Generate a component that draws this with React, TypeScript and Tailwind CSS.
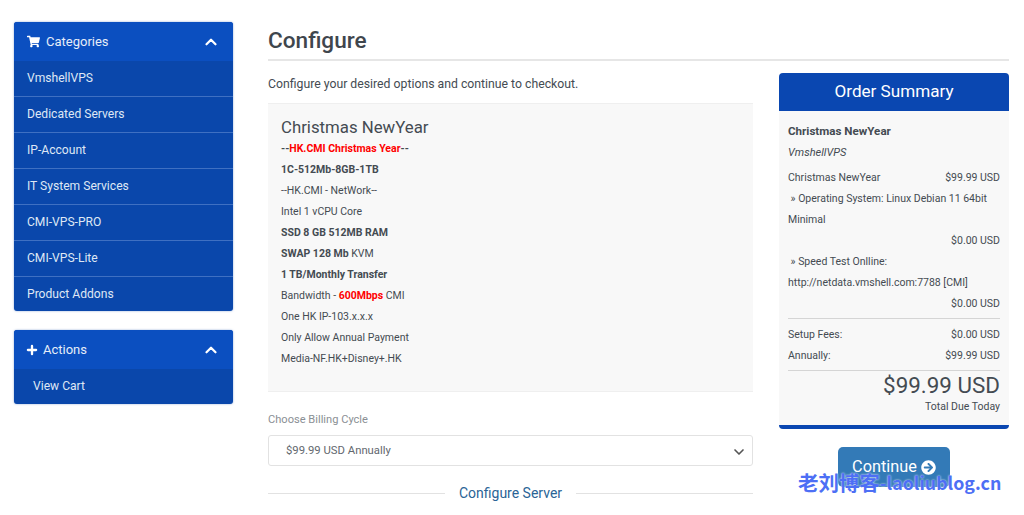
import { ChevronDown, ChevronUp, Plus } from "lucide-react";
import { FaArrowCircleRight, FaShoppingCart } from "react-icons/fa";

const CATEGORIES = [
  "VmshellVPS",
  "Dedicated Servers",
  "IP-Account",
  "IT System Services",
  "CMI-VPS-PRO",
  "CMI-VPS-Lite",
  "Product Addons",
];

function PanelHeader({ icon, title }: { icon: React.ReactNode; title: string }) {
  return (
    <div className="flex h-[39px] items-center bg-[#0b4fc0] pl-[13px] pr-[13px] text-[13px] text-[#e6edf8]">
      {icon}
      <span className="flex-1">{title}</span>
      <ChevronUp className="h-[18px] w-[18px] text-white" strokeWidth={3} />
    </div>
  );
}

function Line({ children }: { children: React.ReactNode }) {
  return <div className="h-[21px] leading-[21px]">{children}</div>;
}

function Row({ left, right }: { left: string; right: string }) {
  return (
    <div className="flex h-[21px] justify-between leading-[21px]">
      <span>{left}</span>
      <span>{right}</span>
    </div>
  );
}

export default function App() {
  return (
    <div className="relative flex h-[515px] w-[1024px] overflow-hidden bg-white font-['Roboto',sans-serif] text-[#444b52]">
      <aside className="ml-[14px] mt-[22px] flex w-[219px] flex-col gap-[19px]">
        <div className="overflow-hidden rounded-[3px] bg-[#0a47ab] shadow-[0_0_2px_rgba(10,71,171,0.5)]">
          <PanelHeader
            icon={<FaShoppingCart className="mr-[6px] h-[13px] w-[13px] text-white" />}
            title="Categories"
          />
          {CATEGORIES.map((name, i) => (
            <div
              key={name}
              className={`flex items-center pl-[13px] text-[12.1px] text-[#dfe7f5] ${
                i > 0 && i < 6 ? "h-[36px] border-t border-[#3f70c2]" : ""
              } ${i === 0 ? "h-[35px]" : ""} ${i === 6 ? "h-[35px] border-t border-[#3f70c2]" : ""}`}
            >
              {name}
            </div>
          ))}
        </div>

        <div className="overflow-hidden rounded-[3px] bg-[#0a47ab] shadow-[0_0_2px_rgba(10,71,171,0.5)]">
          <PanelHeader
            icon={<Plus className="-ml-[2px] mr-[4px] h-[14px] w-[14px] text-white" strokeWidth={4} />}
            title="Actions"
          />
          <div className="flex h-[35px] items-center pl-[19px] text-[12.1px] text-[#dfe7f5]">
            View Cart
          </div>
        </div>
      </aside>

      <main className="ml-[35px] w-[741px] pt-[25px]">
        <h1 className="h-[36px] border-b-2 border-[#e6e6e6] text-[22.6px] font-medium leading-[32px] text-[#3f464d]">
          Configure
        </h1>

        <div className="mt-[14px] flex justify-between">
          <div className="w-[485px]">
            <p className="text-[12.25px] leading-[18px]">
              Configure your desired options and continue to checkout.
            </p>

            <div className="mt-[10px] h-[289px] border-y border-[#efefef] bg-[#f8f8f8] pl-[13px] pt-[12px] text-[10.5px]">
              <div className="h-[22px] text-[16.8px] leading-[22px]">Christmas NewYear</div>
              <Line>
                <b className="font-bold">
                  --<span className="text-[#ff0000]">HK.CMI Christmas Year</span>--
                </b>
              </Line>
              <Line>
                <b className="font-bold">1C-512Mb-8GB-1TB</b>
              </Line>
              <Line>--HK.CMI - NetWork--</Line>
              <Line>Intel 1 vCPU Core</Line>
              <Line>
                <b className="font-bold">SSD 8 GB 512MB RAM</b>
              </Line>
              <Line>
                <b className="font-bold">SWAP 128 Mb</b> KVM
              </Line>
              <Line>
                <b className="font-bold">1 TB/Monthly Transfer</b>
              </Line>
              <Line>
                Bandwidth - <b className="font-bold text-[#ff0000]">600Mbps</b> CMI
              </Line>
              <Line>One HK IP-103.x.x.x</Line>
              <Line>Only Allow Annual Payment</Line>
              <Line>Media-NF.HK+Disney+.HK</Line>
            </div>

            <div className="mt-[20px] text-[11.1px] leading-[16px] text-[#8a8f94]">
              Choose Billing Cycle
            </div>
            <div className="mt-[7px] flex h-[31px] items-center justify-between rounded-[3px] border border-[#e2e2e2] pl-[17px] pr-[5px] pt-[2px] text-[11.3px] text-[#62686e]">
              <span>$99.99 USD Annually</span>
              <ChevronDown className="h-[16px] w-[16px] text-[#555]" strokeWidth={2.5} />
            </div>
            <div className="mt-[18px] flex items-center gap-[14px]">
              <div className="h-px flex-1 bg-[#e2e2e2]" />
              <span className="text-[14px] leading-[18px] text-[#2a6496]">Configure Server</span>
              <div className="h-px flex-1 bg-[#e2e2e2]" />
            </div>
          </div>

          <div className="mt-[-2px] flex w-[230px] flex-col items-center">
            <div className="w-full overflow-hidden rounded-[4px] border-b-4 border-[#0a47b1] bg-[#f8f8f8] text-[10.5px]">
              <div className="flex h-[38px] items-center justify-center bg-[#0a47b1] text-[17.1px] text-white">
                Order Summary
              </div>
              <div className="px-[9px] pb-[11px] pt-[10px]">
                <div className="h-[21px] text-[11.6px] font-bold leading-[21px]">Christmas NewYear</div>
                <div className="h-[21px] text-[11px] italic leading-[21px]">VmshellVPS</div>
                <div className="mt-[4px]">
                  <Row left="Christmas NewYear" right="$99.99 USD" />
                  <Line>&nbsp;» Operating System: Linux Debian 11 64bit</Line>
                  <Line>Minimal</Line>
                  <div className="h-[21px] text-right leading-[21px]">$0.00 USD</div>
                  <Line>&nbsp;» Speed Test Onlline:</Line>
                  <Line>http://netdata.vmshell.com:7788 [CMI]</Line>
                  <div className="h-[21px] text-right leading-[21px]">$0.00 USD</div>
                </div>
                <div className="mt-[4px] border-t border-[#d5d5d5] pt-[5px]">
                  <Row left="Setup Fees:" right="$0.00 USD" />
                  <Row left="Annually:" right="$99.99 USD" />
                </div>
                <div className="mt-[4px] border-t border-[#d5d5d5] text-right">
                  <div className="h-[28px] text-[22.4px] leading-[28px]">$99.99 USD</div>
                  <div className="h-[15px] leading-[15px]">Total Due Today</div>
                </div>
              </div>
            </div>
            <button
              type="button"
              className="mt-[18px] flex h-[40px] w-[112px] items-center justify-center gap-[4px] rounded-[5px] bg-[#337ab7] text-[16.3px] text-white"
            >
              Continue
              <FaArrowCircleRight className="h-[15px] w-[15px]" />
            </button>
          </div>
        </div>
      </main>

      <div className="absolute left-[798px] top-[469px] flex items-center font-semibold leading-[26px] text-[#4d6ff5] [font-family:'Noto_Sans_CJK_SC','Roboto',sans-serif] [text-shadow:0_0_2px_#ffffff]">
        <span className="text-[20.5px]">老刘博客</span>
        <span className="text-[17.8px]">-laoliublog.cn</span>
      </div>
    </div>
  );
}
